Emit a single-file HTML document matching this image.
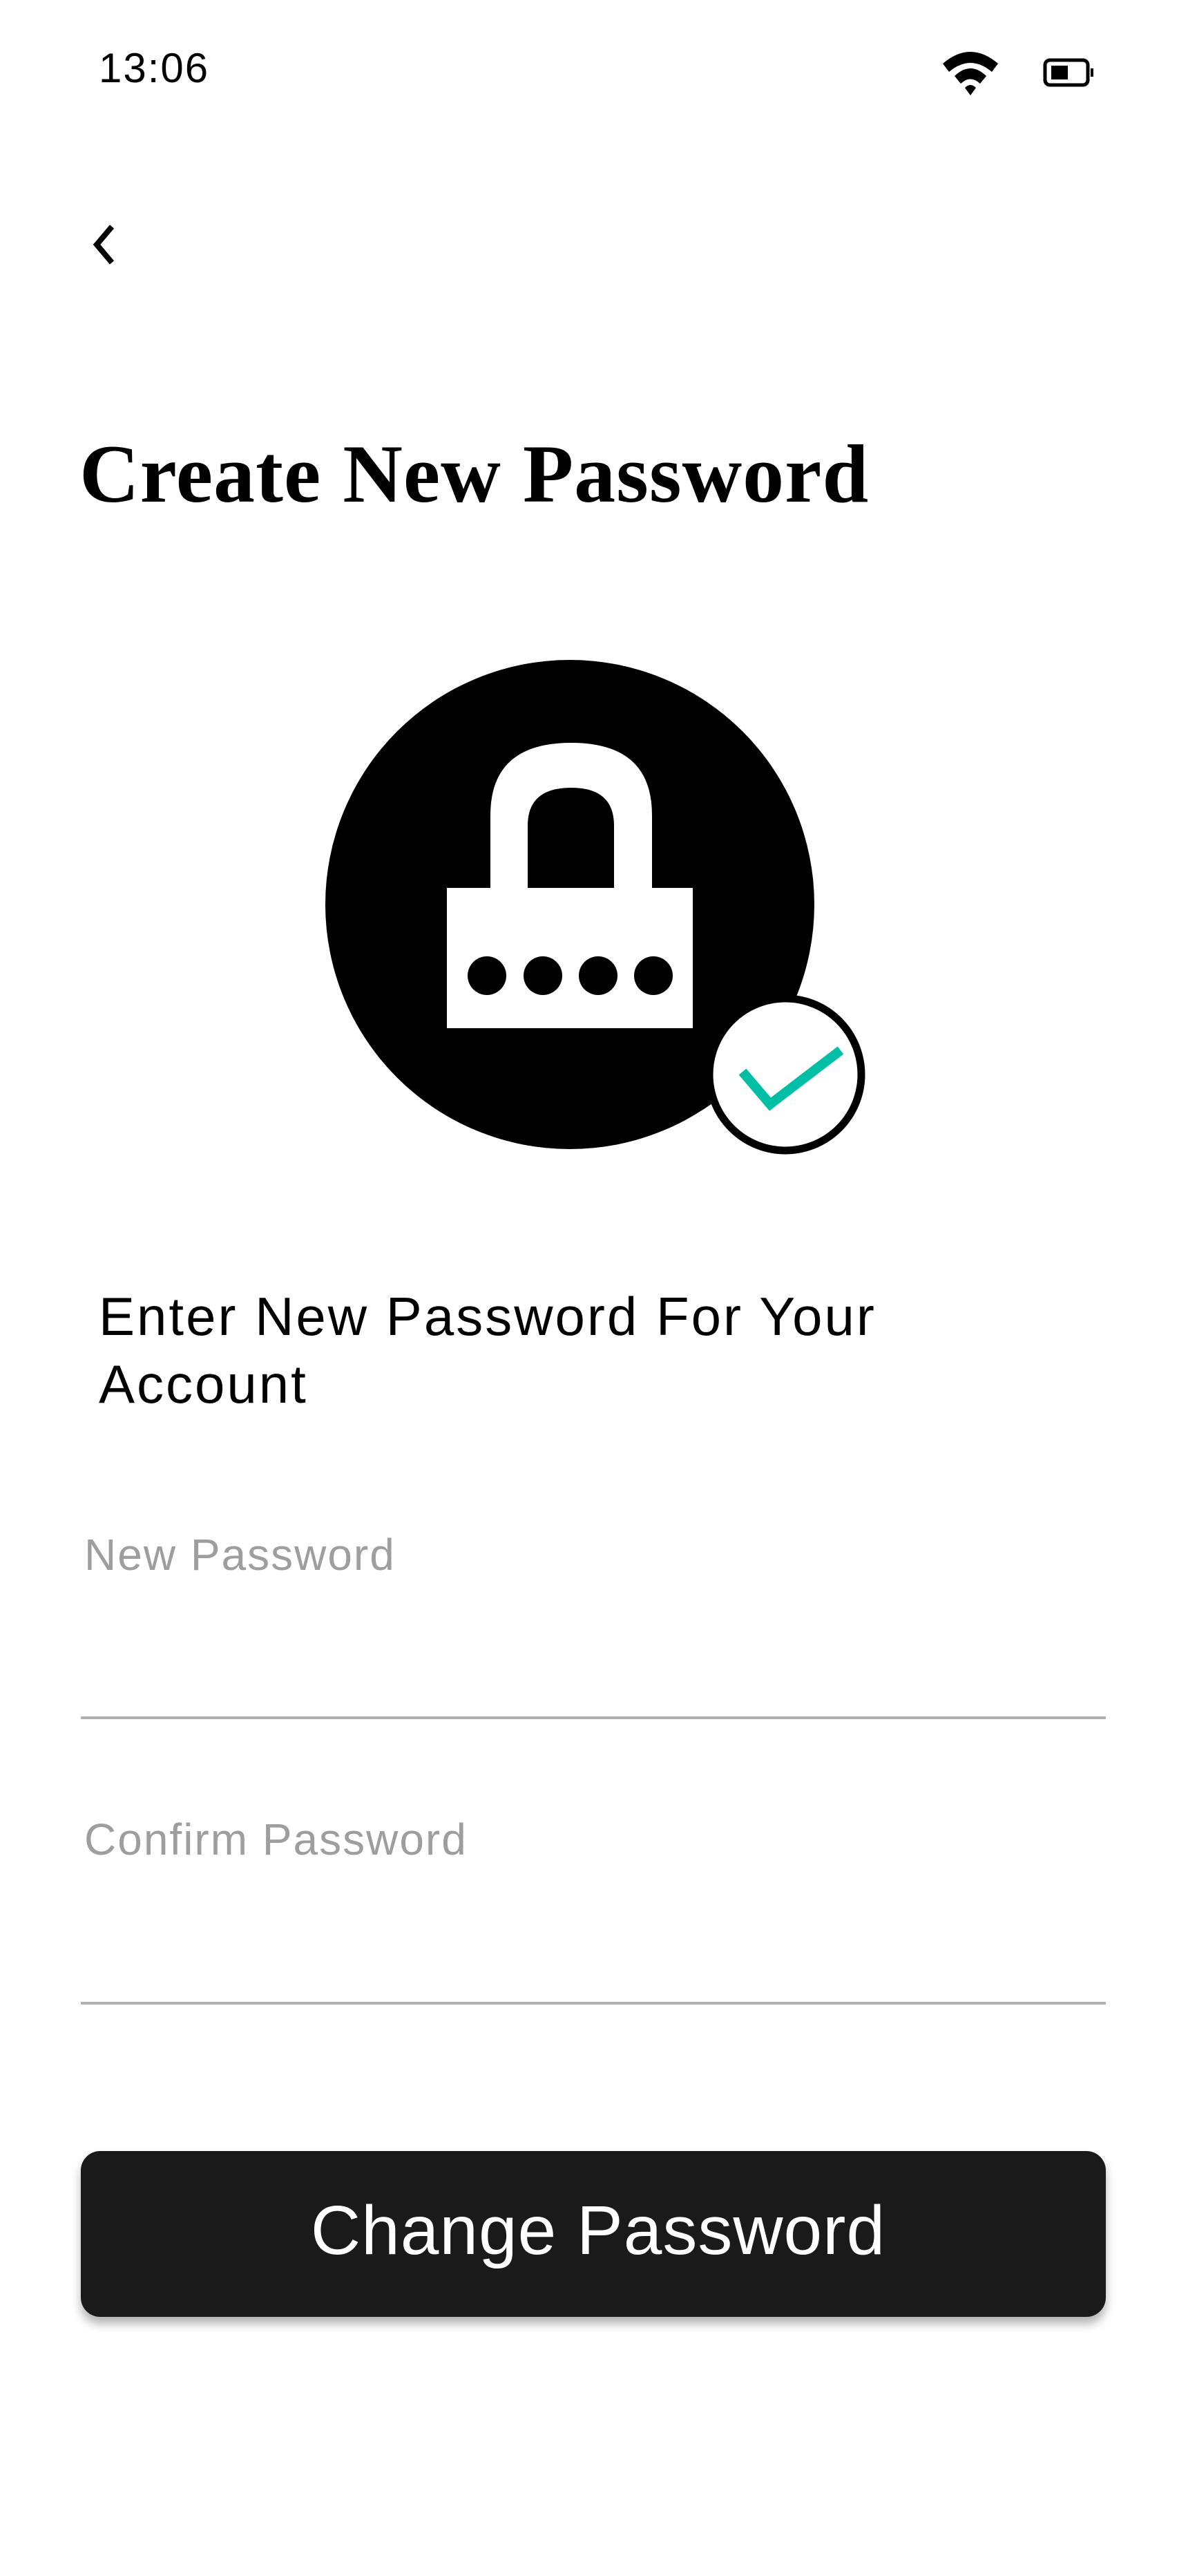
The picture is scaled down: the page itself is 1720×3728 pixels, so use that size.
<!DOCTYPE html>
<html><head><meta charset="utf-8"><style>
html,body{margin:0;padding:0;background:#fff;}
body{width:1720px;height:3728px;position:relative;overflow:hidden;font-family:"Liberation Sans",sans-serif;}
.a{position:absolute;white-space:nowrap;}
</style></head><body>
<div class="a" style="left:143px;top:64px;font-size:60px;line-height:70px;color:#000;letter-spacing:2px;">13:06</div>
<svg class="a" style="left:1360px;top:70px" width="250" height="70" viewBox="0 0 250 70">
<path d="M5 22 Q45 -12 85 22 L76 34 Q45 8 14 34 Z" fill="#000"/>
<path d="M22 40 Q45 18 68 40 L59 51 Q45 38 31 51 Z" fill="#000"/>
<path d="M37 57 Q45 49 53 57 L45 68 Z" fill="#000"/>
<rect x="153" y="17" width="62" height="36" rx="7" fill="none" stroke="#000" stroke-width="5"/>
<rect x="162" y="25" width="24" height="20" fill="#000"/>
<rect x="219" y="29" width="4" height="12" fill="#000"/>
</svg>
<svg class="a" style="left:125px;top:322px" width="50" height="65" viewBox="0 0 50 65">
<path d="M37 6 L15 32 L37 58" fill="none" stroke="#000" stroke-width="8"/>
</svg>
<div class="a" style="left:115px;top:616px;font-family:'Liberation Serif',serif;font-weight:bold;font-size:120px;line-height:140px;color:#000;letter-spacing:1px;">Create New Password</div>
<svg class="a" style="left:0;top:900px" width="1720" height="800" viewBox="0 900 1720 800">
<circle cx="825" cy="1309" r="354" fill="#000"/>
<path d="M710 1285 L710 1180 Q710 1075 827 1075 Q944 1075 944 1180 L944 1285 L889 1285 L889 1195 Q889 1140 827 1140 Q764 1140 764 1195 L764 1285 Z" fill="#fff"/>
<rect x="647" y="1285" width="356" height="203" fill="#fff"/>
<circle cx="705" cy="1412" r="28" fill="#000"/>
<circle cx="786" cy="1412" r="28" fill="#000"/>
<circle cx="866" cy="1412" r="28" fill="#000"/>
<circle cx="946" cy="1412" r="28" fill="#000"/>
<circle cx="1137" cy="1555" r="110" fill="#fff" stroke="#000" stroke-width="11"/>
<path d="M1075 1551 L1115 1598 L1217 1520" fill="none" stroke="#00BFA5" stroke-width="14"/>
</svg>
<div class="a" style="left:143px;top:1856px;font-size:78px;line-height:98px;color:#000;letter-spacing:3px;">Enter New Password For Your<br>Account</div>
<div class="a" style="left:122px;top:2212px;font-size:64px;line-height:76px;color:#9e9e9e;letter-spacing:2px;">New Password</div>
<div class="a" style="left:117px;top:2484px;width:1484px;height:4px;background:#b0b0b0;"></div>
<div class="a" style="left:122px;top:2624px;font-size:64px;line-height:76px;color:#9e9e9e;letter-spacing:2px;">Confirm Password</div>
<div class="a" style="left:117px;top:2897px;width:1484px;height:4px;background:#b0b0b0;"></div>
<div class="a" style="left:117px;top:3113px;width:1470px;padding-left:14px;height:240px;border-radius:28px;background:#1a1a1a;box-shadow:0 10px 14px rgba(0,0,0,0.3);color:#fff;font-size:100px;line-height:230px;text-align:center;letter-spacing:1px;">Change Password</div>
</body></html>
